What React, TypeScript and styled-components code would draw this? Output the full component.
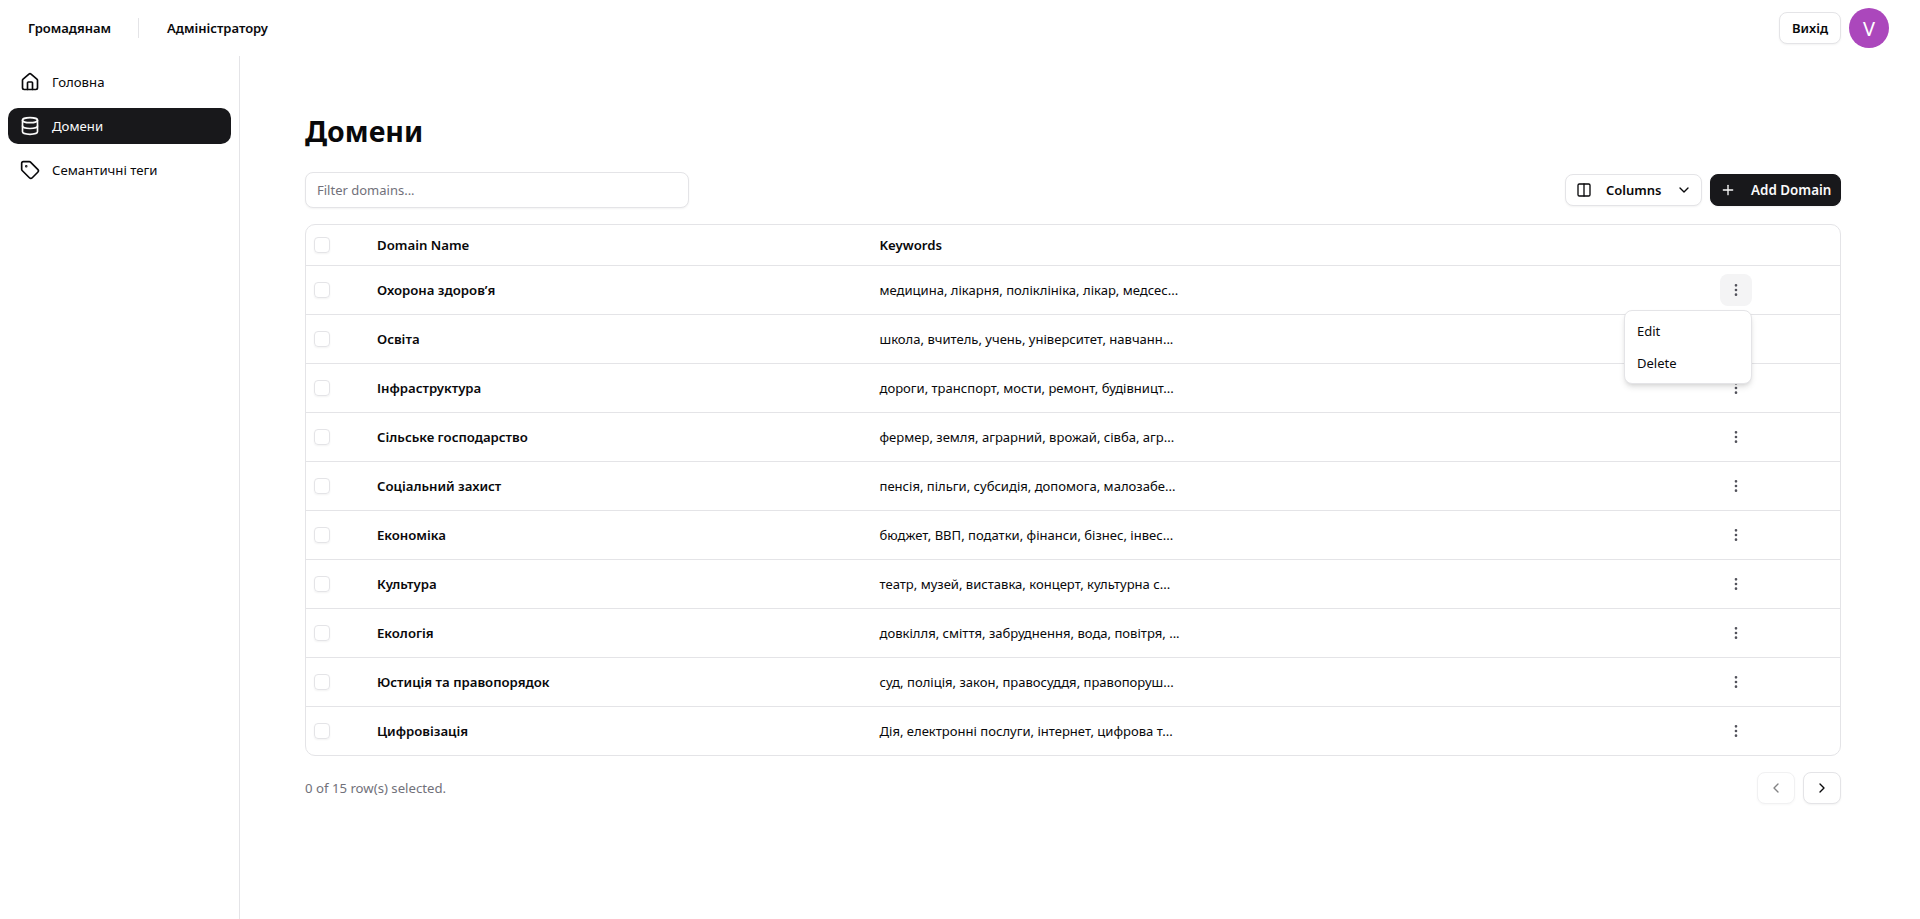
import React from 'react'
import styled, { createGlobalStyle } from 'styled-components'
import {
  ChevronDown,
  ChevronLeft,
  ChevronRight,
  Columns2,
  Database,
  EllipsisVertical,
  House,
  Plus,
  Tag,
} from 'lucide-react'

const GlobalStyle = createGlobalStyle`
  * {
    box-sizing: border-box;
  }

  body {
    margin: 0;
    background: #fff;
    color: #09090b;
    font-family: 'Noto Sans', 'Open Sans', sans-serif;
    font-size: 14px;
  }
`

const Page = styled.div`
  display: flex;
  flex-direction: column;
  height: 919px;
  overflow: hidden;
`

const TopBar = styled.header`
  display: flex;
  align-items: center;
  justify-content: space-between;
  flex: 0 0 56px;
  padding: 0 31px 0 28px;
`

const TopNav = styled.nav`
  display: flex;
  align-items: center;
`

const TopLink = styled.a`
  font-size: 13px;
  font-weight: 600;
  line-height: 20px;
`

const Divider = styled.span`
  width: 1px;
  height: 20px;
  margin: 0 28px 0 27px;
  background: #e4e4e7;
`

const UserArea = styled.div`
  display: flex;
  align-items: center;
  gap: 8px;
`

const Button = styled.button`
  display: inline-flex;
  align-items: center;
  height: 32px;
  border: 1px solid #e4e4e7;
  border-radius: 8px;
  background: #fff;
  box-shadow: 0 1px 2px rgba(0, 0, 0, 0.05);
  color: #09090b;
  font-family: inherit;
  font-size: 13px;
  font-weight: 600;
`

const LogoutButton = styled(Button)`
  justify-content: center;
  width: 62px;
  padding: 0;
`

const Avatar = styled.div`
  display: flex;
  align-items: center;
  justify-content: center;
  width: 40px;
  height: 40px;
  border-radius: 50%;
  background: #ab47bc;
  color: #fff;
  font-size: 20px;
`

const Body = styled.div`
  display: flex;
  flex: 1;
  min-height: 0;
`

const Sidebar = styled.aside`
  display: flex;
  flex-direction: column;
  flex: 0 0 240px;
  gap: 8px;
  padding: 8px;
  border-right: 1px solid #e4e4e7;
`

const SideItem = styled.a<{ $active?: boolean }>`
  display: flex;
  align-items: center;
  gap: 12px;
  height: 36px;
  padding: 0 12px;
  border-radius: 10px;
  background: ${(p) => (p.$active ? '#18181b' : 'transparent')};
  color: ${(p) => (p.$active ? '#fafafa' : '#09090b')};
  font-size: 13.2px;

  svg {
    flex: none;
    width: 20px;
    height: 20px;
  }
`

const Main = styled.main`
  flex: 1;
  min-width: 0;
  padding: 55px 79px 0 65px;
`

const Title = styled.h1`
  margin: 0 0 21px;
  font-size: 28.5px;
  font-weight: 700;
  line-height: 40px;
`

const Toolbar = styled.div`
  display: flex;
  align-items: center;
  justify-content: space-between;
  margin-bottom: 16px;
`

const FilterInput = styled.input`
  width: 384px;
  height: 36px;
  padding: 0 11px;
  border: 1px solid #e4e4e7;
  border-radius: 8px;
  box-shadow: 0 1px 2px rgba(0, 0, 0, 0.05);
  font-family: inherit;
  font-size: 13px;

  &::placeholder {
    color: #71717a;
  }
`

const ToolbarActions = styled.div`
  display: flex;
  align-items: center;
  gap: 8px;
`

const ColumnsButton = styled(Button)`
  gap: 14px;
  width: 137px;
  padding: 0 9px 0 10px;

  span {
    flex: 1;
    text-align: left;
  }

  svg {
    flex: none;
    width: 16px;
    height: 16px;
  }
`

const AddButton = styled(Button)`
  gap: 15px;
  width: 131px;
  padding: 0 0 0 9px;
  border-color: #18181b;
  background: #18181b;
  color: #fafafa;
  font-size: 13.4px;

  svg {
    flex: none;
    width: 16px;
    height: 16px;
  }
`

const TableBox = styled.div`
  border: 1px solid #e4e4e7;
  border-radius: 10px;
`

const Row = styled.div<{ $head?: boolean }>`
  display: grid;
  grid-template-columns: 63px 502.5px 1fr 120px;
  align-items: center;
  height: ${(p) => (p.$head ? '40px' : '49px')};
  border-top: ${(p) => (p.$head ? 'none' : '1px solid #e4e4e7')};
  font-size: 13.05px;
`

const CheckCell = styled.div`
  display: flex;
  padding-left: 8px;
`

const Checkbox = styled.span`
  width: 16px;
  height: 16px;
  border: 1px solid #e4e4e7;
  border-radius: 4px;
  box-shadow: 0 1px 2px rgba(0, 0, 0, 0.05);
`

const Cell = styled.div<{ $strong?: boolean }>`
  padding-left: 8px;
  font-size: ${(p) => (p.$strong ? '13.2px' : 'inherit')};
  font-weight: ${(p) => (p.$strong ? 600 : 400)};
  white-space: nowrap;
`

const ActionCell = styled.div`
  position: relative;
  grid-column: 4;
`

const ActionButton = styled.button<{ $open?: boolean }>`
  display: flex;
  align-items: center;
  justify-content: center;
  width: 32px;
  height: 32px;
  padding: 0;
  border: none;
  border-radius: 8px;
  background: ${(p) => (p.$open ? '#f4f4f5' : 'transparent')};
  color: #52525b;

  svg {
    width: 16px;
    height: 16px;
  }
`

const Menu = styled.div`
  position: absolute;
  z-index: 2;
  top: 36px;
  right: 88px;
  width: 128px;
  padding: 4px;
  border: 1px solid #e4e4e7;
  border-radius: 8px;
  background: #fff;
  box-shadow: 0 4px 6px -1px rgba(0, 0, 0, 0.12), 0 2px 4px -2px rgba(0, 0, 0, 0.1);
`

const MenuItem = styled.div`
  padding: 0 8px;
  font-size: 13px;
  line-height: 32px;
`

const Footer = styled.div`
  display: flex;
  align-items: center;
  justify-content: space-between;
  margin-top: 16px;
`

const SelectedText = styled.span`
  color: #71717a;
  font-size: 13.2px;
`

const Pager = styled.div`
  display: flex;
  gap: 8px;
`

const PageButton = styled(Button)`
  justify-content: center;
  width: 38px;
  padding: 0;
  opacity: ${(p) => (p.disabled ? 0.5 : 1)};

  svg {
    width: 16px;
    height: 16px;
  }
`

const domains = [
  ['Охорона здоров’я', 'медицина, лікарня, поліклініка, лікар, медсес...'],
  ['Освіта', 'школа, вчитель, учень, університет, навчанн...'],
  ['Інфраструктура', 'дороги, транспорт, мости, ремонт, будівницт...'],
  ['Сільське господарство', 'фермер, земля, аграрний, врожай, сівба, агр...'],
  ['Соціальний захист', 'пенсія, пільги, субсидія, допомога, малозабе...'],
  ['Економіка', 'бюджет, ВВП, податки, фінанси, бізнес, інвес...'],
  ['Культура', 'театр, музей, виставка, концерт, культурна с...'],
  ['Екологія', 'довкілля, сміття, забруднення, вода, повітря, ...'],
  ['Юстиція та правопорядок', 'суд, поліція, закон, правосуддя, правопоруш...'],
  ['Цифровізація', 'Дія, електронні послуги, інтернет, цифрова т...'],
]

const App = () => {
  return (
    <Page>
      <GlobalStyle />
      <TopBar>
        <TopNav>
          <TopLink>Громадянам</TopLink>
          <Divider />
          <TopLink>Адміністратору</TopLink>
        </TopNav>
        <UserArea>
          <LogoutButton>Вихід</LogoutButton>
          <Avatar>V</Avatar>
        </UserArea>
      </TopBar>
      <Body>
        <Sidebar>
          <SideItem>
            <House />
            Головна
          </SideItem>
          <SideItem $active>
            <Database />
            Домени
          </SideItem>
          <SideItem>
            <Tag />
            Семантичні теги
          </SideItem>
        </Sidebar>
        <Main>
          <Title>Домени</Title>
          <Toolbar>
            <FilterInput placeholder="Filter domains..." />
            <ToolbarActions>
              <ColumnsButton>
                <Columns2 />
                <span>Columns</span>
                <ChevronDown />
              </ColumnsButton>
              <AddButton>
                <Plus />
                Add Domain
              </AddButton>
            </ToolbarActions>
          </Toolbar>
          <TableBox>
            <Row $head>
              <CheckCell>
                <Checkbox />
              </CheckCell>
              <Cell $strong>Domain Name</Cell>
              <Cell $strong>Keywords</Cell>
            </Row>
            {domains.map(([name, keywords], i) => (
              <Row key={name}>
                <CheckCell>
                  <Checkbox />
                </CheckCell>
                <Cell $strong>{name}</Cell>
                <Cell>{keywords}</Cell>
                <ActionCell>
                  <ActionButton $open={i === 0}>
                    <EllipsisVertical />
                  </ActionButton>
                  {i === 0 && (
                    <Menu>
                      <MenuItem>Edit</MenuItem>
                      <MenuItem>Delete</MenuItem>
                    </Menu>
                  )}
                </ActionCell>
              </Row>
            ))}
          </TableBox>
          <Footer>
            <SelectedText>0 of 15 row(s) selected.</SelectedText>
            <Pager>
              <PageButton disabled>
                <ChevronLeft />
              </PageButton>
              <PageButton>
                <ChevronRight />
              </PageButton>
            </Pager>
          </Footer>
        </Main>
      </Body>
    </Page>
  )
}

export default App
